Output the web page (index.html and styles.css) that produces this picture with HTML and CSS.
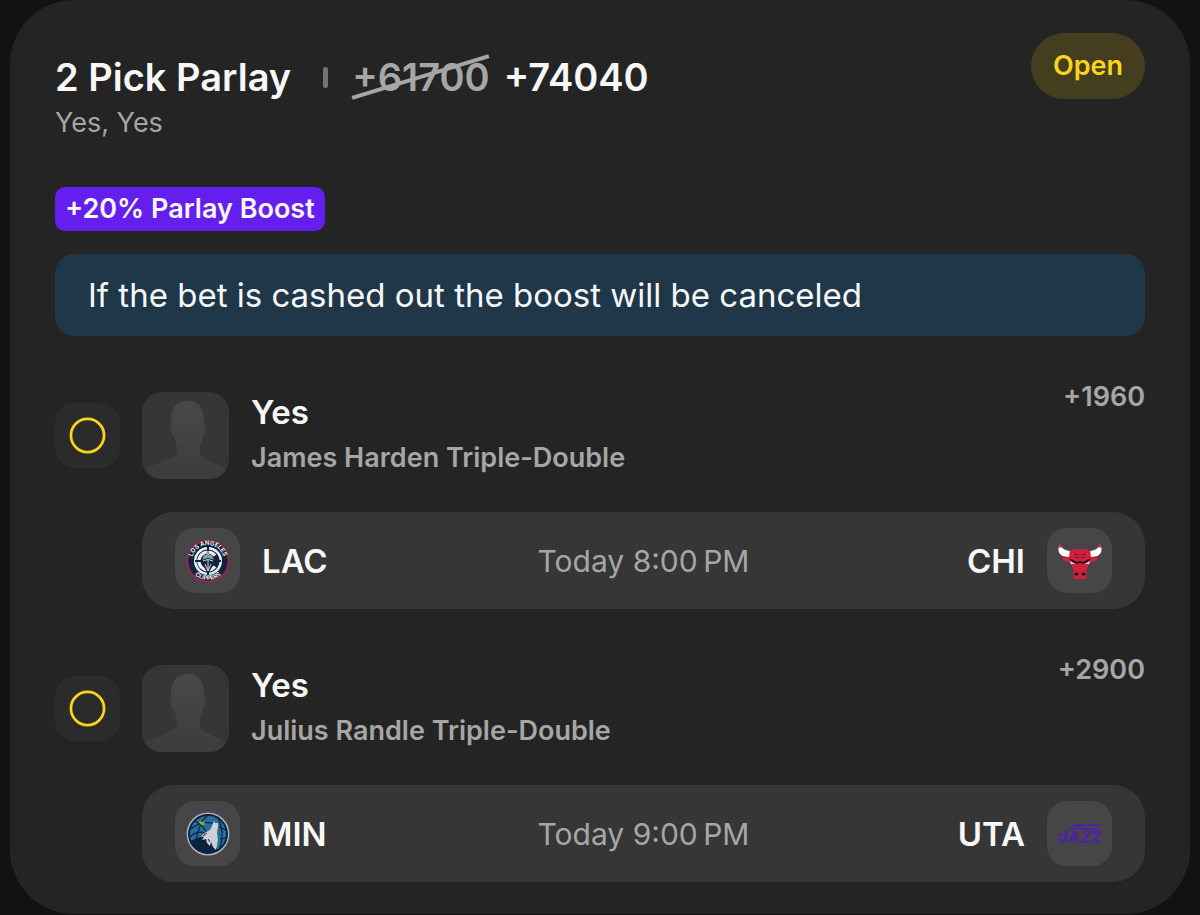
FILE: index.html
```html
<!DOCTYPE html>
<html lang="en">
<head>
  <meta charset="UTF-8">
  <meta name="viewport" content="width=device-width, initial-scale=1">
  <title>2 Pick Parlay</title>
  <link rel="stylesheet" href="styles.css">
</head>
<body>
  <main class="card">
    <header class="card-header">
      <div class="heading">
        <div class="title-row">
          <h1>2 Pick Parlay</h1>
          <span class="divider"></span>
          <div class="odds">
            <s class="old-odds">+61700</s>
            <strong>+74040</strong>
          </div>
        </div>
        <p class="subtitle">Yes, Yes</p>
      </div>
      <span class="status">Open</span>
    </header>

    <span class="boost">+20% Parlay Boost</span>
    <p class="notice">If the bet is cashed out the boost will be canceled</p>

    <section class="leg">
      <div class="pick">
        <div class="tile pending">
          <svg width="37" height="37" viewBox="0 0 38 38"><circle cx="19" cy="19" r="17" fill="none" stroke="#fbd51c" stroke-width="2.800"/></svg>
        </div>
        <div class="avatar">
          <svg viewBox="0 0 87 87">
            <defs>
              <linearGradient id="person" x1="0" y1="0" x2="0" y2="1">
                <stop offset="0" stop-color="#484848"/>
                <stop offset="1" stop-color="#3c3c3c"/>
              </linearGradient>
            </defs>
            <path fill="url(#person)" d="M46 9C34 9 29 17 29 28L30 33C28 34 28 36 29 39C30 43 31 44 33 45C33 50 34 53 35 55V60C34 63 32 65 27 67L12 73C6 75 2 77 0 81V87H87V81C84 77 81 75 76 73L64 68C59 65 58 63 58 60V54C60 51 61 48 61 44C63 41 64 36 63 33L62 32C63 17 57 9 46 9Z"/>
          </svg>
        </div>
        <div class="pick-info">
          <h2>Yes</h2>
          <p>James Harden Triple-Double</p>
        </div>
        <span class="pick-odds">+1960</span>
      </div>
      <div class="match">
        <div class="team">
          <div class="tile logo">
            <svg width="44" height="44" viewBox="0 0 44 44">
              <defs>
                <path id="lac-top" d="M6 22A16 16 0 0 1 38 22"/>
                <path id="lac-bottom" d="M3 22A19 19 0 0 0 41 22"/>
              </defs>
              <circle cx="22" cy="22" r="20.500" fill="#10233f" stroke="#b82042" stroke-width="1.500"/>
              <circle cx="22" cy="22" r="14" fill="#edf0f3"/>
              <circle cx="22" cy="22" r="11.500" fill="#10233f"/>
              <path d="M29 16.500A9 9 0 1 0 29 27.500" fill="none" stroke="#edf0f3" stroke-width="3.200"/>
              <path d="M9 22H16M28 22H35M22 8V14M22 31V36" stroke="#10233f" stroke-width="2"/>
              <path d="M16 21L18 16H20L21 12H23L24 16H26L28 21L22 23Z" fill="#8c99a8"/>
              <path d="M15 21L22 19L29 21L26 28L22 35L18 28Z" fill="#10233f"/>
              <path d="M17 22L22 20.500L27 22M19 25L22 32L25 25M22 21V32" fill="none" stroke="#cbd2db" stroke-width="1"/>
              <text class="ring-text"><textPath href="#lac-top" startOffset="50%">LOS ANGELES</textPath></text>
              <text class="ring-text"><textPath href="#lac-bottom" startOffset="50%">CLIPPERS</textPath></text>
            </svg>
          </div>
          <span>LAC</span>
        </div>
        <time>Today 8:00&#8239;PM</time>
        <div class="team away">
          <span>CHI</span>
          <div class="tile logo">
            <svg width="46" height="44" viewBox="0 0 46 44">
              <path fill="#fff" d="M3 5C0 10 1 16 8 18L14 18V12C9 12 5 10 3 5ZM43 5C46 10 45 16 38 18L32 18V12C37 12 41 10 43 5Z"/>
              <path fill="#cf203f" d="M1 10L3 3L5 9L3 8ZM45 10L43 3L41 9L43 8Z"/>
              <path fill="#cf203f" d="M13 11Q23 9 33 11L34 18L41 17L40 21Q38 23 34 23L31 27L29 32L30 38L27 40H19L16 38L17 32L15 27L12 23Q8 23 6 21L5 17L12 18Z"/>
              <path d="M12 19L20 23L23 22L26 23L34 19L32 22L26 25L23 24L20 25L14 22Z" fill="#260f15"/>
              <path d="M13 22L18 25L14 25ZM33 22L28 25L32 25Z" fill="#f4dfe2"/>
              <path d="M17 15L22 16M29 15L24 16M18 18L22 19M28 18L24 19" stroke="#80162b" stroke-width="1" fill="none"/>
              <ellipse cx="19.500" cy="35" rx="2" ry="1.600" fill="#260f15"/>
              <ellipse cx="26.500" cy="35" rx="2" ry="1.600" fill="#260f15"/>
            </svg>
          </div>
        </div>
      </div>
    </section>

    <section class="leg">
      <div class="pick">
        <div class="tile pending">
          <svg width="37" height="37" viewBox="0 0 38 38"><circle cx="19" cy="19" r="17" fill="none" stroke="#fbd51c" stroke-width="2.800"/></svg>
        </div>
        <div class="avatar">
          <svg viewBox="0 0 87 87">
            <path fill="url(#person)" d="M46 9C34 9 29 17 29 28L30 33C28 34 28 36 29 39C30 43 31 44 33 45C33 50 34 53 35 55V60C34 63 32 65 27 67L12 73C6 75 2 77 0 81V87H87V81C84 77 81 75 76 73L64 68C59 65 58 63 58 60V54C60 51 61 48 61 44C63 41 64 36 63 33L62 32C63 17 57 9 46 9Z"/>
          </svg>
        </div>
        <div class="pick-info">
          <h2>Yes</h2>
          <p>Julius Randle Triple-Double</p>
        </div>
        <span class="pick-odds">+2900</span>
      </div>
      <div class="match">
        <div class="team">
          <div class="tile logo">
            <svg width="44" height="44" viewBox="0 0 44 44">
              <circle cx="22" cy="22" r="20.500" fill="#276d9e" stroke="#a9b2bd" stroke-width="1.800"/>
              <circle cx="22" cy="22" r="19" fill="none" stroke="#0c2340" stroke-width="1.800"/>
              <path d="M5 17Q14 9 27 11M9 9Q17 13 21 21M22 3Q13 10 10 28M32 6Q39 20 34 36M4 25Q11 18 19 21M33 15L40 18M34 27L40 26" fill="none" stroke="#0c2340" stroke-width="1.200"/>
              <path d="M4 29L14 25L22 26L32 38Q25 42 17 41Q8 38 4 29Z" fill="#0c2340"/>
              <path d="M28 9L29 11L32 11L32 15L31 21L32 28L30 38L27 35L25 30L24 34L21 31L20 27L16 28L18 25L15 24L20 20L24 18L26 14Z" fill="#cdd1d5"/>
              <path d="M17 24L21 21M22 27L24 30" stroke="#0c2340" stroke-width="1"/>
              <path d="M13 9L16 10L19 9L18 11L20 12L16 13L14 12Z" fill="#78be20"/>
            </svg>
          </div>
          <span>MIN</span>
        </div>
        <time>Today 9:00&#8239;PM</time>
        <div class="team away">
          <span>UTA</span>
          <div class="tile logo">
            <svg width="46" height="44" viewBox="0 0 46 44">
              <path d="M14 15L18 12H28L27 15ZM29 12H45L43 14H29ZM13 16H42L41 18H13ZM1 22H7V24H1Z" fill="#4e249c"/>
              <text class="jazz-text" x="1" y="31">JAZZ</text>
            </svg>
          </div>
        </div>
      </div>
    </section>
  </main>
</body>
</html>
```

FILE: styles.css
```css
* {
  margin: 0;
  padding: 0;
  box-sizing: border-box;
}

body {
  background: #121212;
  color: #f7f7f7;
  font-family: Inter, "Liberation Sans", sans-serif;
  padding: 0 10px;
}

.card {
  background: #242424;
  border-radius: 64px;
  padding: 33px 45px 32px;
}

.card-header {
  display: flex;
  justify-content: space-between;
  align-items: flex-start;
}

.heading {
  padding-top: 20px;
}

.title-row {
  display: flex;
  align-items: center;
  font-size: 38px;
  line-height: 48px;
}

h1 {
  font-size: 38px;
  font-weight: 600;
}

.divider {
  width: 5px;
  height: 21px;
  margin: 0 24px 0 32px;
  border-radius: 3px;
  background: #747474;
}

.odds {
  display: flex;
  gap: 14px;
}

.odds strong {
  font-weight: 600;
}

.old-odds {
  position: relative;
  color: #a6a6a6;
  font-weight: 600;
  text-decoration: none;
}

/* diagonal strike over the price before the boost */
.old-odds::after {
  content: "";
  position: absolute;
  left: -3px;
  right: -3px;
  top: 22px;
  height: 4px;
  background: #a6a6a6;
  transform: rotate(-17deg);
}

.subtitle {
  margin-top: 5px;
  color: #a6a6a6;
  font-size: 27px;
  line-height: 34px;
}

.status {
  padding: 0 22px;
  border-radius: 33px;
  background: #443d1e;
  color: #fbd51c;
  font-size: 27px;
  font-weight: 600;
  line-height: 66px;
}

.boost {
  display: block;
  width: fit-content;
  margin-top: 47px;
  padding: 0 10px;
  border-radius: 10px;
  background: #641eee;
  font-size: 27px;
  font-weight: 600;
  line-height: 44px;
}

.notice {
  margin-top: 23px;
  padding: 17px 33px;
  border-radius: 20px;
  background: #1f3748;
  font-size: 33px;
  line-height: 48px;
}

.leg {
  margin-top: 44px;
}

.pick {
  display: flex;
  align-items: center;
  gap: 22px;
  min-height: 110px;
}

.tile {
  display: flex;
  align-items: center;
  justify-content: center;
  flex: none;
  width: 65px;
  height: 65px;
  border-radius: 20px;
}

.pending {
  background: #2b2b2b;
}

.avatar {
  flex: none;
  width: 87px;
  height: 87px;
  border-radius: 20px;
  background: #363636;
  overflow: hidden;
}

.avatar svg {
  display: block;
}

.pick-info {
  flex: 1;
}

h2 {
  font-size: 33px;
  font-weight: 600;
  line-height: 46px;
}

.pick-info p {
  color: #a6a6a6;
  font-size: 27px;
  font-weight: 600;
  line-height: 46px;
}

.pick-odds {
  align-self: flex-start;
  color: #a6a6a6;
  font-size: 27px;
  font-weight: 600;
  line-height: 34px;
}

.match {
  display: grid;
  grid-template-columns: 1fr auto 1fr;
  align-items: center;
  margin-top: 22px;
  margin-left: 87px;
  padding: 16px 33px;
  border-radius: 32px;
  background: #363636;
}

.team {
  display: flex;
  align-items: center;
  gap: 22px;
  font-size: 33px;
  font-weight: 600;
}

.away {
  justify-content: flex-end;
}

.logo {
  background: #464646;
}

.match time {
  color: #a6a6a6;
  font-size: 30px;
}

.ring-text {
  fill: #fff;
  font-size: 6px;
  font-weight: 600;
  text-anchor: middle;
}

.jazz-text {
  fill: #4e249c;
  font-size: 16px;
  font-style: italic;
  font-weight: 900;
}
```
